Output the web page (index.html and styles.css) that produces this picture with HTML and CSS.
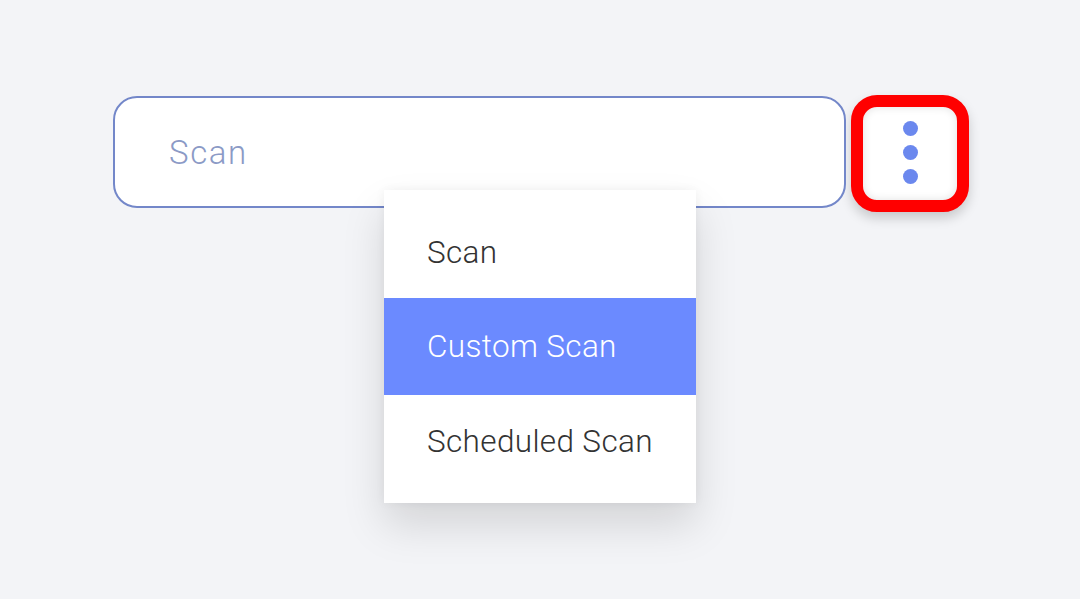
FILE: index.html
```html
<!DOCTYPE html>
<html>
<head>
<meta charset="utf-8">
<link rel="stylesheet" href="styles.css">
</head>
<body>
<div class="page">
  <div class="row">
    <div class="field">
      <span class="field-text">Scan</span>
      <ul class="menu">
        <li class="item">Scan</li>
        <li class="item active">Custom Scan</li>
        <li class="item">Scheduled Scan</li>
      </ul>
    </div>
    <button class="more" aria-label="More">
      <span class="dot"></span><span class="dot"></span><span class="dot"></span>
    </button>
  </div>
</div>
</body>
</html>
```
FILE: styles.css
```css
html, body {
  margin: 0;
  padding: 0;
  background: #f3f4f7;
  font-family: Roboto, "Liberation Sans", sans-serif;
}
.page {
  width: 1080px;
  height: 599px;
  padding: 95px 0 0 113px;
  box-sizing: border-box;
}
.row {
  display: flex;
  align-items: flex-start;
  gap: 5px;
}
.field {
  position: relative;
  margin-top: 1px;
  width: 733px;
  height: 112px;
  box-sizing: border-box;
  border: 2.5px solid #7387c9;
  border-radius: 24px;
  background: #fff;
  display: flex;
  align-items: center;
  padding-left: 54px;
}
.field-text {
  font-size: 33px;
  font-weight: 300;
  letter-spacing: 1.6px;
  color: #8b9ac6;
  margin-top: 1px;
}
.menu {
  position: absolute;
  left: 269px;
  top: 92px;
  width: 312px;
  margin: 0;
  padding: 16px 0;
  list-style: none;
  background: #fff;
  box-shadow: 0 22px 40px rgba(0, 0, 0, 0.13), 0 0 10px rgba(0, 0, 0, 0.05);
  z-index: 2;
}
.item {
  height: 92px;
  display: flex;
  align-items: center;
  padding-left: 43px;
  font-size: 31.5px;
  font-weight: 300;
  letter-spacing: 0.35px;
  color: #333;
}
.item.active {
  height: 97px;
  background: #6b8aff;
  color: #fff;
}
.more {
  width: 118px;
  height: 117px;
  box-sizing: border-box;
  border: 12px solid #ff0000;
  border-radius: 26px;
  background: #fff;
  box-shadow: 0 6px 12px rgba(0, 0, 0, 0.18), inset 0 0 8px rgba(0, 0, 0, 0.12);
  padding: 0 0 2px;
  display: flex;
  flex-direction: column;
  align-items: center;
  justify-content: center;
  gap: 9px;
}
.dot {
  width: 15px;
  height: 15px;
  border-radius: 50%;
  background: #6b88ee;
}
```
